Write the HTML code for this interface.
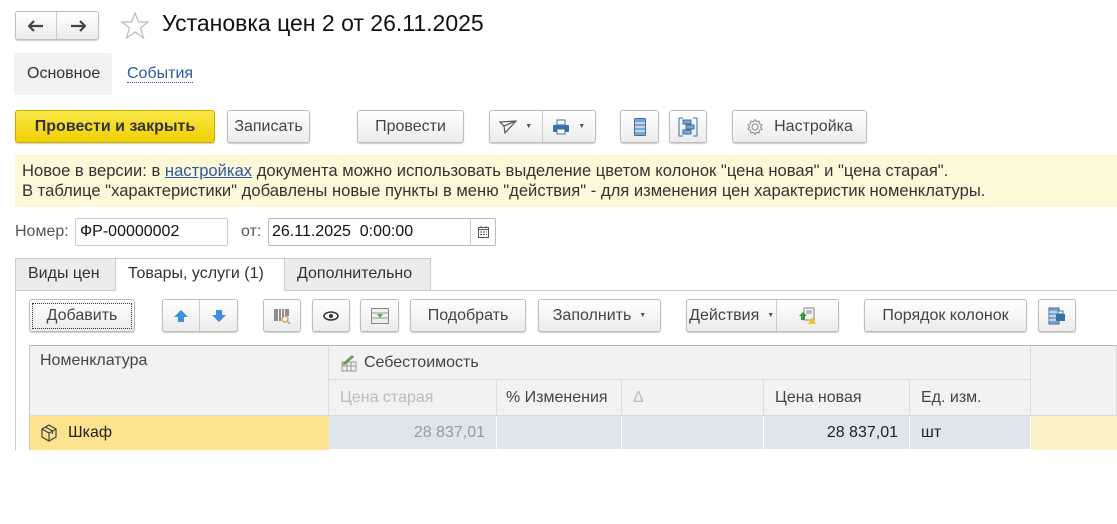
<!DOCTYPE html>
<html><head><meta charset="utf-8"><style>
*{box-sizing:border-box;margin:0;padding:0}
body{width:1117px;height:524px;background:#fff;font-family:"Liberation Sans",sans-serif;font-size:16px;color:#333;position:relative;overflow:hidden}
.a{position:absolute}
.btn{position:absolute;border:1px solid #bdbdbd;border-radius:3px;background:linear-gradient(#fff,#ececec);box-shadow:0 1px 1px rgba(0,0,0,.2);display:flex;align-items:center;justify-content:center;color:#444}
.dd{font-size:7px;margin-left:8px;color:#555}
.cell{position:absolute;border-right:1px solid #dcdcdc;border-bottom:1px solid #dcdcdc;padding:0 11px;display:flex;align-items:center}
</style></head><body>
<div class="btn" style="left:15px;top:11px;width:84px;height:29px;padding:0"><span style="width:42px;height:27px;display:flex;align-items:center;justify-content:center;border-right:1px solid #ccc"><svg width="16" height="12"><path d="M1 6h14M6 1L1 6l5 5" fill="none" stroke="#444" stroke-width="2.2"/></svg></span><span style="width:42px;display:flex;justify-content:center"><svg width="16" height="12"><path d="M1 6h14M10 1l5 5-5 5" fill="none" stroke="#444" stroke-width="2.2"/></svg></span></div>
<svg class="a" style="left:119px;top:11px" width="32" height="29" viewBox="0 0 32 29"><polygon points="16,2 19.5,11 29,11 21.5,17 24.5,27 16,21 7.5,27 10.5,17 3,11 12.5,11" fill="none" stroke="#bbb" stroke-width="1.2"/></svg>
<div class="a" style="left:162px;top:10px;font-size:23px;color:#111">Установка цен 2 от 26.11.2025</div>
<div class="a" style="left:14px;top:53px;width:98px;height:42px;background:#f2f2f2;border-radius:3px"></div>
<div class="a" style="left:27px;top:65px;color:#333">Основное</div>
<div class="a" style="left:127px;top:65px;color:#2a5aa8;border-bottom:1px dotted #2a5aa8;line-height:17px">События</div>
<div class="btn" style="left:15px;top:110px;width:200px;height:33px;background:linear-gradient(#fbe84a,#f0cf00);border-color:#c9ad00;font-weight:bold;color:#333">Провести и закрыть</div>
<div class="btn" style="left:227px;top:110px;width:83px;height:33px">Записать</div>
<div class="btn" style="left:357px;top:110px;width:107px;height:33px">Провести</div>
<div class="btn" style="left:489px;top:110px;width:107px;height:33px;justify-content:flex-start">
<span style="width:53px;display:flex;align-items:center;justify-content:center;border-right:1px solid #ccc;height:31px"><svg width="18" height="14"><path d="M1 2 L17 1 L6 13 L5 6 Z M5 6 L17 1" fill="none" stroke="#555" stroke-width="1.2"/></svg><span class="dd">▼</span></span>
<span style="width:53px;display:flex;align-items:center;justify-content:center"><svg width="18" height="16"><rect x="5" y="1" width="8" height="5" fill="#fff" stroke="#3a6fa8"/><rect x="1" y="6" width="16" height="7" rx="1" fill="#3a6fa8"/><rect x="5" y="10" width="8" height="5" fill="#fff" stroke="#3a6fa8"/></svg><span class="dd">▼</span></span></div>
<div class="btn" style="left:620px;top:110px;width:39px;height:33px"><svg width="12" height="18"><rect x="0.5" y="0.5" width="11" height="17" rx="1" fill="#7fa6cf" stroke="#3a6fa8"/><path d="M1 5h10M1 9h10M1 13h10" stroke="#fff"/></svg></div>
<div class="btn" style="left:669px;top:110px;width:38px;height:33px"><svg width="20" height="20"><path d="M1 1h4M1 1v18h4M19 1h-4M19 1v18h-4" stroke="#3a6fa8" fill="none"/><rect x="5" y="3" width="8" height="4" fill="#7fa6cf" stroke="#3a6fa8"/><rect x="8" y="8" width="8" height="4" fill="#7fa6cf" stroke="#3a6fa8"/><rect x="5" y="13" width="8" height="4" fill="#7fa6cf" stroke="#3a6fa8"/></svg></div>
<div class="btn" style="left:732px;top:110px;width:135px;height:33px"><svg width="18" height="18" style="margin-right:10px"><circle cx="9" cy="9" r="3" fill="none" stroke="#888"/><path d="M9 1.5l1.5 2.2 2.6-.7.3 2.7 2.5 1-1.3 2.3 1.3 2.3-2.5 1-.3 2.7-2.6-.7L9 16.5l-1.5-2.2-2.6.7-.3-2.7-2.5-1L3.4 9 2.1 6.7l2.5-1 .3-2.7 2.6.7z" fill="none" stroke="#888"/></svg>Настройка</div>
<div class="a" style="left:15px;top:155px;width:1102px;height:52px;background:#fdf8d8"></div>
<div class="a" style="left:22px;top:161px;line-height:20px;color:#333;font-size:16.6px">Новое в версии: в <span style="color:#2a5aa8;text-decoration:underline">настройках</span> документа можно использовать выделение цветом колонок "цена новая" и "цена старая".<br>В таблице "характеристики" добавлены новые пункты в меню "действия" - для изменения цен характеристик номенклатуры.</div>
<div class="a" style="left:15px;top:223px;color:#555">Номер:</div>
<div class="a" style="left:75px;top:218px;width:153px;height:28px;border:1px solid #ccc;border-radius:2px;padding:4px 4px;color:#111">ФР-00000002</div>
<div class="a" style="left:241px;top:223px;color:#555">от:</div>
<div class="a" style="left:268px;top:218px;width:228px;height:28px;border:1px solid #bbb;border-radius:2px;padding:4px 3px;color:#111">26.11.2025&nbsp; 0:00:00</div>
<div class="a" style="left:470px;top:218px;width:26px;height:28px;border-left:1px solid #ccc;display:flex;align-items:center;justify-content:center"><svg width="11" height="12"><rect x="0.5" y="1.5" width="10" height="10" fill="none" stroke="#555"/><path d="M0 3.5h11M2 6h2M5 6h2M8 6h1M2 8.5h2M5 8.5h2M8 8.5h1" stroke="#555"/><path d="M3 0v2M8 0v2" stroke="#555"/></svg></div>
<div class="a" style="left:15px;top:258px;width:101px;height:33px;background:#ececec;border:1px solid #ccc;padding:6px 12px;color:#333">Виды цен</div>
<div class="a" style="left:284px;top:258px;width:147px;height:33px;background:#ececec;border:1px solid #ccc;padding:6px 12px;color:#333">Дополнительно</div>
<div class="a" style="left:15px;top:290px;width:1102px;height:1px;background:#ccc"></div>
<div class="a" style="left:15px;top:290px;width:1px;height:160px;background:#ccc"></div>
<div class="a" style="left:115px;top:258px;width:170px;height:33px;background:#fff;border:1px solid #ccc;border-bottom:none;padding:6px 12px;color:#333">Товары, услуги (1)</div>
<div class="btn" style="left:29px;top:299px;width:106px;height:33px"><span style="outline:1px dotted #333;padding:3px 14px">Добавить</span></div>
<div class="btn" style="left:162px;top:299px;width:76px;height:33px;padding:0"><span style="width:37px;border-right:1px solid #ccc;display:flex;justify-content:center;height:31px;align-items:center"><svg width="16" height="14"><path d="M8 1L15 8H11V13H5V8H1Z" fill="#3d8fe0"/></svg></span><span style="width:37px;display:flex;justify-content:center"><svg width="16" height="14"><path d="M8 13L15 6H11V1H5V6H1Z" fill="#3d8fe0"/></svg></span></div>
<div class="btn" style="left:263px;top:299px;width:38px;height:33px"><svg width="18" height="18"><path d="M2 2v12M4 2v12M7 2v12M10 2v9M13 2v7M15 2v7" stroke="#555" stroke-width="1.3"/><circle cx="12" cy="12" r="3" fill="none" stroke="#c8a060" stroke-width="1.3"/><path d="M14 14l3 3" stroke="#c8a060" stroke-width="1.5"/></svg></div>
<div class="btn" style="left:312px;top:299px;width:38px;height:33px"><svg width="16" height="10"><ellipse cx="8" cy="5" rx="7" ry="4" fill="none" stroke="#333" stroke-width="1.5"/><circle cx="8" cy="5" r="2" fill="#333"/></svg></div>
<div class="btn" style="left:360px;top:299px;width:39px;height:33px"><svg width="18" height="16"><rect x="0.5" y="0.5" width="17" height="15" fill="#eee" stroke="#888"/><path d="M1 5h16M1 10h16" stroke="#999"/><path d="M6 6h6l-3 4z" fill="#4caf50"/></svg></div>
<div class="btn" style="left:410px;top:299px;width:116px;height:33px">Подобрать</div>
<div class="btn" style="left:538px;top:299px;width:123px;height:33px">Заполнить<span class="dd">▼</span></div>
<div class="btn" style="left:686px;top:299px;width:153px;height:33px;padding:0"><span style="width:91px;border-right:1px solid #ccc;display:flex;justify-content:center;align-items:center;height:31px">Действия<span class="dd">▼</span></span><span style="width:61px;display:flex;justify-content:center"><svg width="18" height="18"><rect x="5" y="1" width="10" height="12" fill="#f4f4f4" stroke="#888"/><path d="M7 4h6M7 6h6" stroke="#888"/><path d="M4 5l4 4H6v4H2V9H0z" fill="#2e9e3e"/><path d="M9 17l4-7 4 7z" fill="#f3c623"/></svg></span></div>
<div class="btn" style="left:864px;top:299px;width:163px;height:33px">Порядок колонок</div>
<div class="btn" style="left:1038px;top:299px;width:38px;height:33px"><svg width="18" height="18"><rect x="1" y="1" width="10" height="16" fill="#7fa6cf" stroke="#3a6fa8"/><path d="M1 5h10M1 9h10M1 13h10" stroke="#fff"/><rect x="8" y="7" width="9" height="7" fill="#3a6fa8"/><rect x="10" y="4" width="5" height="3" fill="#fff" stroke="#3a6fa8"/></svg></div>
<div class="a" style="left:29px;top:345px;width:1088px;height:105px;border-top:1px solid #bbb;border-left:1px solid #ccc"></div>
<div class="cell" style="left:30px;top:346px;width:299px;height:70px;background:#f2f2f2;align-items:flex-start;padding-top:6px;padding-left:10px;color:#444">Номенклатура</div>
<div class="cell" style="left:329px;top:346px;width:702px;height:34px;background:#f2f2f2;color:#444"><svg width="18" height="18" style="margin-right:6px"><rect x="2" y="8" width="14" height="9" fill="#eee" stroke="#999"/><path d="M2 12h14M7 8v9M11 8v9" stroke="#999"/><path d="M3 9l9-8 2 2-9 8z" fill="#5ca34a"/><path d="M3 9l-1 3 3-1z" fill="#d9a54a"/></svg>Себестоимость</div>
<div class="cell" style="left:1031px;top:346px;width:86px;height:70px;background:#f2f2f2"></div>
<div class="cell" style="left:329px;top:380px;width:168px;height:36px;background:#f2f2f2;color:#bbb">Цена старая</div>
<div class="cell" style="left:497px;top:380px;width:125px;height:36px;background:#f2f2f2;color:#444;padding-left:9px">% Изменения</div>
<div class="cell" style="left:622px;top:380px;width:142px;height:36px;background:#f2f2f2;color:#bbb">Δ</div>
<div class="cell" style="left:764px;top:380px;width:146px;height:36px;background:#f2f2f2;color:#444">Цена новая</div>
<div class="cell" style="left:910px;top:380px;width:121px;height:36px;background:#f2f2f2;color:#444">Ед. изм.</div>
<div class="cell" style="left:30px;top:416px;width:299px;height:34px;background:#fde38e;color:#222;border-color:#fde38e"><svg width="16" height="18" style="margin-right:11px"><path d="M8 1l7 4v8l-7 4-7-4V5zM1 5l7 4 7-4M8 9v8M4.5 3l7 4v3" fill="none" stroke="#444" stroke-width="1.2"/></svg>Шкаф</div>
<div class="cell" style="left:329px;top:416px;width:168px;height:34px;background:#dfe5ec;color:#999;justify-content:flex-end;border-color:#fff">28 837,01</div>
<div class="cell" style="left:497px;top:416px;width:125px;height:34px;background:#dfe5ec;border-color:#fff"></div>
<div class="cell" style="left:622px;top:416px;width:142px;height:34px;background:#dfe5ec;border-color:#fff"></div>
<div class="cell" style="left:764px;top:416px;width:146px;height:34px;background:#dfe5ec;color:#222;justify-content:flex-end;border-color:#fff">28 837,01</div>
<div class="cell" style="left:910px;top:416px;width:121px;height:34px;background:#dfe5ec;color:#222;border-color:#fff">шт</div>
<div class="cell" style="left:1031px;top:416px;width:86px;height:34px;background:#fdf1c7;border:none"></div>
</body></html>
